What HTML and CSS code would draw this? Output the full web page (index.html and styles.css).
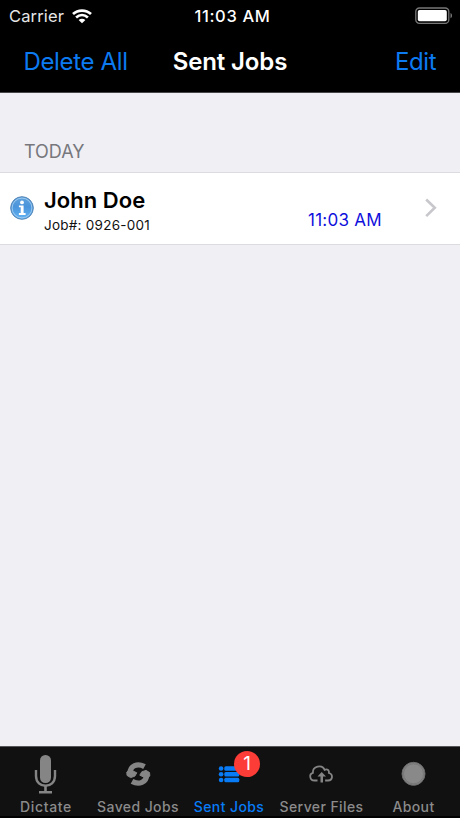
FILE: index.html
```html
<!DOCTYPE html>
<html lang="en">
<head>
<meta charset="utf-8">
<title>Sent Jobs</title>
<link rel="stylesheet" href="styles.css">
</head>
<body>
<div class="app">
  <header class="header">
    <div class="status">
      <div class="network">
        <span class="carrier">Carrier</span>
        <svg class="wifi" width="20" height="15" viewBox="0 0 20 15" fill="none" stroke="#fff" stroke-width="2.7">
          <path d="M1 5.1C6 .4 14 .4 19 5.1M4.1 8.5c3.5-3.1 8.3-3.1 11.8 0"/>
          <path d="M10 14.3 6.6 11c2-1.7 4.8-1.7 6.8 0z" fill="#fff" stroke="none"/>
        </svg>
      </div>
      <span class="clock">11:03 AM</span>
      <svg class="battery" width="38" height="18" viewBox="0 0 38 18">
        <rect x=".8" y="1" width="33" height="15.3" rx="3.6" fill="none" stroke="#777" stroke-width="1.3"/>
        <rect x="2.8" y="3" width="29" height="11.3" rx="1.8" fill="#fff"/>
        <path d="M35.5 6v5.3c2-.8 2-4.5 0-5.3z" fill="#777"/>
      </svg>
    </div>
    <nav class="nav">
      <span class="action delete">Delete All</span>
      <h1 class="title">Sent Jobs</h1>
      <span class="action edit">Edit</span>
    </nav>
  </header>
  <main class="content">
    <h2 class="section">TODAY</h2>
    <div class="row">
      <svg class="info" width="24" height="24" viewBox="0 0 24 24">
        <defs><linearGradient id="blue" x2="0" y2="1"><stop stop-color="#61a3dc"/><stop offset=".45" stop-color="#4a94dc"/><stop offset="1" stop-color="#62b4f3"/></linearGradient></defs>
        <circle cx="12" cy="12" r="11.3" fill="url(#blue)" stroke="#5585b5" stroke-width="1"/>
        <circle cx="12" cy="12" r="9.9" fill="none" stroke="#9bc9ef" stroke-width="1"/>
        <circle cx="12" cy="6.4" r="1.9" fill="#fff"/>
        <path d="M8.9 9.5h4.7v7.6h2v1.9H8.9v-1.9h1.8v-5.8H8.9z" fill="#fff"/>
      </svg>
      <div class="job">
        <span class="name">John Doe</span>
        <span class="number">Job#: 0926-001</span>
      </div>
      <span class="sent">11:03 AM</span>
      <svg class="chevron" width="12" height="20" viewBox="0 0 12 20" fill="none" stroke="#c7c7cc" stroke-width="2.6"><path d="m1.2 1.5 8.6 8.3-8.6 8.3"/></svg>
    </div>
  </main>
  <footer class="tabs">
    <div class="tab">
      <svg class="icon" width="40" height="44" viewBox="0 0 40 44" fill="none" stroke="#858585">
        <rect x="15" y="9" width="11" height="28" rx="5.3" fill="#858585" stroke="none"/>
        <path d="M11 24v6c0 13 19 13 19 0v-6" stroke-width="2.4"/>
        <path d="M20.5 39v6M14 46.3h13" stroke-width="2.6"/>
      </svg>
      <span class="label dictate">Dictate</span>
    </div>
    <div class="tab">
      <svg class="icon" width="40" height="44" viewBox="0 0 40 44" fill="none" stroke="#858585" stroke-width="5.4">
        <path d="M13 27.5C13 19.500 20.500 16.800 27.500 20.600"/>
        <path d="M29.600 28.500C29.600 36.500 22 39.200 15 35.400"/>
        <path d="M9.800 26l3-2.500 7 3.300-2 3.400-4.200 1.400-3.600-2.200zM32.800 30l-3 2.500-7-3.300 2-3.400 4.200-1.400 3.600 2.200z" fill="#858585" stroke-width="1" stroke-linejoin="round"/>
      </svg>
      <span class="label saved">Saved Jobs</span>
    </div>
    <div class="tab active">
      <svg class="icon" width="40" height="44" viewBox="0 0 40 44" fill="#087cf7">
        <circle cx="12.1" cy="22.5" r="2.3"/><circle cx="12.1" cy="28.2" r="2.3"/><circle cx="12.1" cy="34" r="2.3"/>
        <rect x="15.3" y="20.3" width="15" height="4.5" rx="1.5"/><rect x="15.3" y="26" width="15" height="4.5" rx="1.5"/><rect x="15.3" y="31.7" width="15" height="4.5" rx="1.5"/>
      </svg>
      <span class="badge">1</span>
      <span class="label current">Sent Jobs</span>
    </div>
    <div class="tab">
      <svg class="icon" width="40" height="44" viewBox="0 0 40 44" fill="none" stroke="#858585" stroke-width="1.8">
        <path d="M16.5 34.500h-3c-5 0-5.700-6.600-1.600-7.700-.5-6.800 9.300-8.800 11.700-3 3.100-1.200 4.800.8 4.300 3.200 4.800 1.500 3.600 7.500-.8 7.500h-3"/>
        <path d="M19.500 36.500V30.500h-3l4.200-4.600 4.300 4.600h-3v6z" fill="#858585" stroke="none"/>
      </svg>
      <span class="label server">Server Files</span>
    </div>
    <div class="tab">
      <svg class="icon" width="40" height="44" viewBox="0 0 40 44">
        <circle cx="20.500" cy="27.800" r="11.500" fill="#858585" stroke="#6d6d6d"/>
        <circle cx="20.500" cy="27.800" r="10" fill="#898989" stroke="#747474" stroke-width=".8"/>
      </svg>
      <span class="label about">About</span>
    </div>
  </footer>
</div>
</body>
</html>
```
FILE: styles.css
```css
* { box-sizing: border-box; }
body { margin: 0; font-family: Inter, "Liberation Sans", sans-serif; }
.app { height: 818px; display: flex; flex-direction: column; background: #efeff4; overflow: hidden; white-space: nowrap; }
h1, h2 { margin: 0; }
.header { height: 93px; background: #000; color: #fff; border-bottom: 1px solid #47474a; }
.status { height: 32px; display: grid; grid-template-columns: 1fr auto 1fr; align-items: center; padding: 0 7px 0 9px; }
.network { display: flex; align-items: center; gap: 8px; }
.carrier { font-size: 16.5px; line-height: 32px; color: #e6e6e6; letter-spacing: .15px; }
.clock { font-size: 16.5px; line-height: 32px; font-weight: 550; letter-spacing: .65px; margin-left: 3px; }
.battery { justify-self: end; }
.nav { height: 60px; display: grid; grid-template-columns: 1fr auto 1fr; align-items: center; padding: 0 24px 0 23px; line-height: 58px; }
.action { font-size: 24px; color: #0c7af0; letter-spacing: -.35px; }
.delete { padding-left: .5px; }
.edit { justify-self: end; margin-right: -.3px; }
.title { font-size: 24px; font-weight: 600; letter-spacing: -.15px; padding-left: 1px; }
.content { flex: 1; }
.section { height: 79px; padding: 44px 24px 0; font-size: 18px; line-height: 30px; font-weight: 400; color: #77777c; }
.row { height: 73px; background: #fff; border: solid #dcdce0; border-width: 1px 0; display: flex; padding-left: 10px; }
.info { margin-top: 23px; }
.job { display: flex; flex-direction: column; width: 274px; padding: 13px 0 0 10px; }
.name { font-size: 22px; line-height: 28px; font-weight: 600; color: #000; letter-spacing: .05px; }
.number { font-size: 13.5px; line-height: 22px; color: #111; letter-spacing: .25px; }
.sent { width: 117px; padding-top: 36px; font-size: 17px; line-height: 22px; color: #1010dc; letter-spacing: .25px; }
.chevron { margin-top: 25px; }
.tabs { height: 72px; background: #111; border-top: 1px solid #555659; border-bottom: 2px solid #000; display: grid; grid-template-columns: repeat(5, 92px); }
.tab { position: relative; display: flex; flex-direction: column; align-items: center; color: #8b8b8b; }
.icon { height: 44px; margin: 3px 2px 0 0; transform: translateY(-4px); overflow: visible; }
.label { font-size: 14px; line-height: 18px; margin-top: 4px; font-weight: 450; letter-spacing: .4px; }
.dictate { letter-spacing: .65px; }
.server { padding-right: 1px; }
.about { padding-right: 1px; }
.current { padding-right: 2px; }
.active { color: #087cf7; }
.badge { position: absolute; left: 50px; top: 4px; width: 26px; height: 26px; border-radius: 50%; background: #fc3c36; color: #fff; text-align: center; font-size: 19px; line-height: 26px; }
```
